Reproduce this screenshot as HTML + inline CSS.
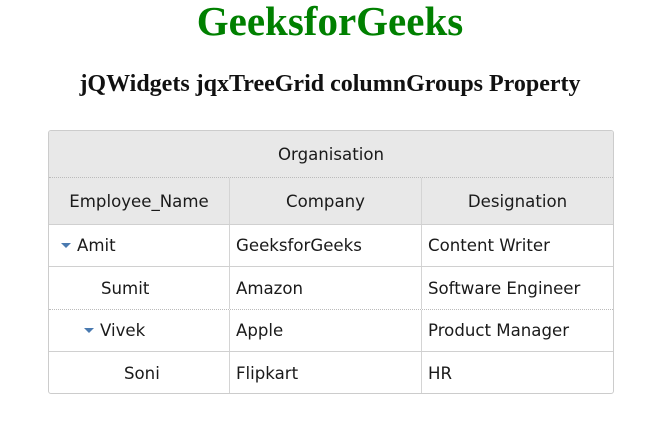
<!DOCTYPE html>
<html><head><style>
body{margin:0;background:#fff;width:660px;height:423px;overflow:hidden;position:relative;font-family:"DejaVu Sans",Verdana,sans-serif;}
h1{position:absolute;top:0;left:0;width:660px;margin:0;text-align:center;font:bold 41px "Liberation Serif",serif;color:#008000;line-height:42px;}
h3{position:absolute;top:70px;left:0;width:660px;margin:0;text-align:center;font:bold 24px "Liberation Serif",serif;color:#111;line-height:28px;}
.g{position:absolute;left:48px;top:130px;width:564px;height:262px;border:1px solid #ccc;border-radius:3px;overflow:hidden;font-size:16.6px;color:#1a1a1a;}
.r{position:absolute;left:0;width:564px;border-bottom:1px solid #d0d0d0;box-sizing:border-box;}
.c{position:absolute;top:0;height:100%;display:flex;align-items:center;box-sizing:border-box;white-space:nowrap;}
.h{background:#e8e8e8;}
.tri{display:inline-block;width:0;height:0;border-left:5px solid transparent;border-right:5px solid transparent;border-top:5px solid #4a7ab0;margin-right:6px;}
</style></head><body>
<h1>GeeksforGeeks</h1>
<h3>jQWidgets jqxTreeGrid columnGroups Property</h3>
<div class="g">
 <div class="r h" style="top:0;height:47px;border-bottom:1px dotted #bbb"><div class="c" style="left:0;width:564px;justify-content:center">Organisation</div></div>
 <div class="r h" style="top:47px;height:47px">
  <div class="c" style="left:0;width:181px;justify-content:center;border-right:1px solid #d4d4d4">Employee_Name</div>
  <div class="c" style="left:181px;width:192px;justify-content:center;border-right:1px solid #d4d4d4">Company</div>
  <div class="c" style="left:373px;width:191px;justify-content:center">Designation</div>
 </div>
 <div class="r" style="top:94px;height:42px">
  <div class="c" style="left:0;width:181px;padding-left:12px;border-right:1px solid #d4d4d4"><span class="tri"></span>Amit</div>
  <div class="c" style="left:181px;width:192px;padding-left:6px;border-right:1px solid #d4d4d4">GeeksforGeeks</div>
  <div class="c" style="left:373px;width:191px;padding-left:6px">Content Writer</div>
 </div>
 <div class="r" style="top:136px;height:43px;border-bottom:1px dotted #bbb">
  <div class="c" style="left:0;width:181px;padding-left:52px;border-right:1px solid #d4d4d4">Sumit</div>
  <div class="c" style="left:181px;width:192px;padding-left:6px;border-right:1px solid #d4d4d4">Amazon</div>
  <div class="c" style="left:373px;width:191px;padding-left:6px">Software Engineer</div>
 </div>
 <div class="r" style="top:179px;height:42px">
  <div class="c" style="left:0;width:181px;padding-left:35px;border-right:1px solid #d4d4d4"><span class="tri"></span>Vivek</div>
  <div class="c" style="left:181px;width:192px;padding-left:6px;border-right:1px solid #d4d4d4">Apple</div>
  <div class="c" style="left:373px;width:191px;padding-left:6px">Product Manager</div>
 </div>
 <div class="r" style="top:221px;height:42px;border-bottom:none">
  <div class="c" style="left:0;width:181px;padding-left:75px;border-right:1px solid #d4d4d4">Soni</div>
  <div class="c" style="left:181px;width:192px;padding-left:6px;border-right:1px solid #d4d4d4">Flipkart</div>
  <div class="c" style="left:373px;width:191px;padding-left:6px">HR</div>
 </div>
</div>
</body></html>
